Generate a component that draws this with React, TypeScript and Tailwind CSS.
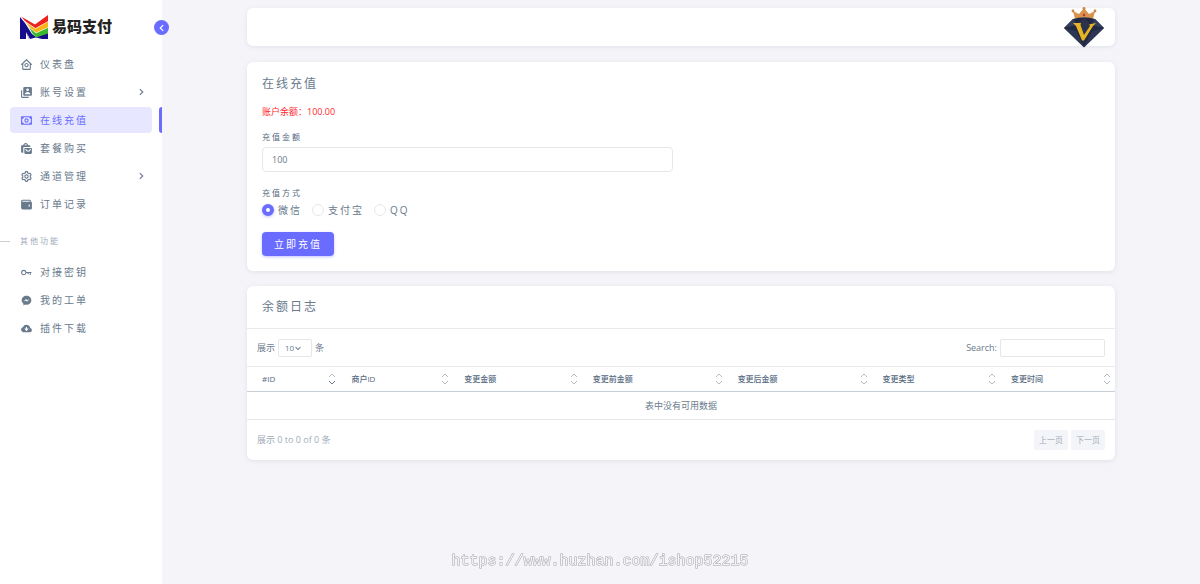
import React, { useState } from 'react';
import type { IconType } from 'react-icons';
import {
  BiChevronDown,
  BiChevronLeft,
  BiChevronRight,
  BiCog,
  BiHomeCircle,
  BiKey,
  BiLogoMessenger,
  BiMoney,
  BiSolidCloudDownload,
  BiSolidShoppingBags,
  BiSolidUserAccount,
  BiSolidWallet,
} from 'react-icons/bi';

type MenuItem = {
  label: string;
  icon: IconType;
  hasChildren?: boolean;
  active?: boolean;
};

const mainMenu: MenuItem[] = [
  { label: '仪表盘', icon: BiHomeCircle },
  { label: '账号设置', icon: BiSolidUserAccount, hasChildren: true },
  { label: '在线充值', icon: BiMoney, active: true },
  { label: '套餐购买', icon: BiSolidShoppingBags },
  { label: '通道管理', icon: BiCog, hasChildren: true },
  { label: '订单记录', icon: BiSolidWallet },
];

const otherMenu: MenuItem[] = [
  { label: '对接密钥', icon: BiKey },
  { label: '我的工单', icon: BiLogoMessenger },
  { label: '插件下载', icon: BiSolidCloudDownload },
];

const payMethods = [
  { id: 'wechat', label: '微信' },
  { id: 'alipay', label: '支付宝' },
  { id: 'qq', label: 'QQ' },
];

const columns = [
  { label: '#ID', width: 'w-[10.3%]', sorted: true },
  { label: '商户ID', width: 'w-[13%]' },
  { label: '变更金额', width: 'w-[14.8%]' },
  { label: '变更前金额', width: 'w-[16.7%]' },
  { label: '变更后金额', width: 'w-[16.7%]' },
  { label: '变更类型', width: 'w-[14.8%]' },
  { label: '变更时间', width: 'w-[13.7%]' },
];

const cardClass = 'rounded-md bg-white shadow-[0_1px_5px_rgba(67,89,113,0.12)]';

function Logo() {
  return (
    <svg viewBox="0 0 28 25" className="h-[25px] w-7" aria-hidden="true">
      <path d="M0 2 L5 8 L12 19 L16 22 L28 17 V24 H9 L6 17 V24 H0 Z" fill="#160f8c" />
      <path d="M9 24 L7 18 L10 24 Z M10 24 L16 22.500 L22 24 Z" fill="#fff" />
      <path d="M1 1.500 L15 9.500 L28 0 V7 L15.500 13.500 L5 6.500 Z" fill="#ee2020" />
      <path d="M5 6.500 L15.500 13.500 L28 6.500 V12.500 L16 18 L9 12 Z" fill="#fcb414" />
      <path d="M9 12 L16 18 L28 12.500 V18.500 L16 22.500 L12.500 18.500 Z" fill="#3cb82c" />
      <path d="M1 1.500 L5 6.500 L15.500 13.500 L28 6.500" fill="none" stroke="#fff" strokeWidth="0.600" />
      <path d="M5 6.500 L9 12 L16 18 L28 12.500" fill="none" stroke="#fff" strokeWidth="0.600" />
    </svg>
  );
}

function Avatar() {
  return (
    <svg viewBox="0 0 42 42" className="h-[42px] w-[42px]" role="img" aria-label="VIP">
      <path d="M12 13 L10 5 L16 8 L21 2 L26 8 L32 5 L30 13 Q21 10 12 13 Z" fill="#d8934f" />
      <circle cx="10" cy="5" r="1.400" fill="#c98545" />
      <circle cx="21" cy="2.500" r="1.400" fill="#c98545" />
      <circle cx="32" cy="5" r="1.400" fill="#c98545" />
      <circle cx="21" cy="9" r="1.300" fill="#c23b34" />
      <path d="M10 13 Q21 9.500 32 13 L41 22 L21 41.500 L1 22 Z" fill="#222940" />
      <path d="M10 13 L14 19 L1 22 Z M32 13 L28 19 L41 22 Z" fill="#343e5e" />
      <path d="M14 19 L21 12 L28 19 L21 34 Z" fill="#2b334d" />
      <path d="M1 22 L13 25 L21 41 Z M41 22 L29 25 L21 41 Z" fill="#2d3654" />
      <path
        d="M10 17 H18 L17.500 19 L21 29 L27 20 L26 18.500 L33 17 L30 20 L21 34.500 H19 L13 20 Z"
        fill="#e9b422"
      />
    </svg>
  );
}

function SortIcon({ sorted }: { sorted?: boolean }) {
  return (
    <svg viewBox="0 0 8 12" className="h-3 w-2 shrink-0" fill="none" stroke="#697a8d" aria-hidden="true">
      <path d="M1 4 L4 1 L7 4" opacity="0.5" />
      <path d="M1 8 L4 11 L7 8" opacity={sorted ? 1 : 0.5} />
    </svg>
  );
}

function MenuList({ items }: { items: MenuItem[] }) {
  return (
    <ul className="flex flex-col gap-0.5">
      {items.map(({ label, icon: Icon, hasChildren, active }) => (
        <li key={label} className="relative px-2.5">
          <a
            href="#"
            className={`flex h-[26px] items-center rounded pr-1 pl-2.5 ${
              active ? 'bg-[#e7e7ff] text-[#696cff]' : 'text-[#697a8d]'
            }`}
          >
            <Icon className="mr-[7px] size-[13px] shrink-0" />
            <span className="flex-1 text-[10px] tracking-[2px]">{label}</span>
            {hasChildren && <BiChevronRight className="size-3.5" />}
          </a>
          {active && <span className="absolute inset-y-0 right-0 w-[3px] rounded-l bg-[#696cff]" />}
        </li>
      ))}
    </ul>
  );
}

function Sidebar() {
  return (
    <aside className="relative w-[162px] shrink-0 bg-white">
      <div className="flex h-[51px] items-center gap-1 pt-1 pl-5">
        <Logo />
        <span className="font-['Liberation_Serif','Noto_Sans_CJK_SC',serif] text-[15px] font-black text-[#222]">
          易码支付
        </span>
      </div>
      <button
        type="button"
        aria-label="收起菜单"
        className="absolute top-5 -right-[7px] flex size-[15px] items-center justify-center rounded-full bg-[#696cff] text-white"
      >
        <BiChevronLeft className="size-3.5 shrink-0" />
      </button>
      <nav>
        <MenuList items={mainMenu} />
        <div className="mt-3 mb-1.5 flex h-6 items-center gap-2.5">
          <span className="h-px w-2.5 bg-[#c9d0d8]" />
          <span className="text-[8px] tracking-[2px] text-[#a1acb8]">其他功能</span>
        </div>
        <MenuList items={otherMenu} />
      </nav>
    </aside>
  );
}

function RechargeCard() {
  const [amount, setAmount] = useState('100');
  const [method, setMethod] = useState('wechat');

  return (
    <section className={`${cardClass} px-[15px] pt-[13px] pb-[15px]`}>
      <h2 className="text-xs leading-[18px] tracking-[2px] text-[#697a8d]">在线充值</h2>
      <p className="mt-[11px] text-[9px] leading-4 text-[#ff1f2d]">账户余额：100.00</p>
      <form onSubmit={(e) => e.preventDefault()}>
        <label htmlFor="amount" className="mt-[11px] block text-[8px] leading-3 tracking-[2px] text-[#566a7f]">
          充值金额
        </label>
        <input
          id="amount"
          value={amount}
          onChange={(e) => setAmount(e.target.value)}
          className="mt-1 block h-[25px] w-[49%] rounded-sm border border-[#e4e8ec] px-[9px] text-[9px] text-[#697a8d] outline-none"
        />
        <fieldset className="mt-[15px]">
          <legend className="text-[8px] leading-3 tracking-[2px] text-[#566a7f]">充值方式</legend>
          <div className="mt-[3px] flex gap-2.5">
            {payMethods.map((m) => (
              <label key={m.id} className="flex h-4 items-center gap-1 text-[10px] tracking-[2px] text-[#697a8d]">
                <input
                  type="radio"
                  name="method"
                  checked={method === m.id}
                  onChange={() => setMethod(m.id)}
                  className="size-3 appearance-none rounded-full border border-[#e4e8ec] bg-white checked:border-4 checked:border-[#696cff] checked:shadow-[0_1px_3px_rgba(105,108,255,0.4)]"
                />
                {m.label}
              </label>
            ))}
          </div>
        </fieldset>
        <button
          type="submit"
          className="mt-3.5 flex h-6 items-center rounded bg-[#696cff] px-3 text-[10px] tracking-[2px] text-white shadow-[0_1px_3px_rgba(105,108,255,0.4)]"
        >
          立即充值
        </button>
      </form>
    </section>
  );
}

function BalanceLog() {
  const [keyword, setKeyword] = useState('');

  return (
    <section className={`${cardClass} text-[9px] text-[#697a8d]`}>
      <h2 className="flex h-[42px] items-center px-[15px] text-xs tracking-[2px]">余额日志</h2>
      <div className="flex h-[38px] items-center justify-between border-t border-[#e9ecef] px-2.5">
        <label className="flex items-center gap-[3px]">
          展示
          <span className="relative flex items-center">
            <select className="h-[18px] w-[34px] appearance-none rounded-xs border border-[#e4e8ec] pl-1.5 text-[8px] outline-none">
              <option>10</option>
              <option>25</option>
              <option>50</option>
              <option>100</option>
            </select>
            <BiChevronDown className="pointer-events-none absolute right-2 size-3" />
          </span>
          条
        </label>
        <label className="flex items-center gap-[3px]">
          Search:
          <input
            type="search"
            value={keyword}
            onChange={(e) => setKeyword(e.target.value)}
            className="h-[18px] w-[105px] rounded-xs border border-[#e4e8ec] px-1.5 outline-none"
          />
        </label>
      </div>
      <table className="w-full table-fixed border-collapse">
        <thead>
          <tr className="h-[25px] border-t border-b border-t-[#e9ecef] border-b-[#c9cfd6]">
            {columns.map((col) => (
              <th
                key={col.label}
                className={`${col.width} p-0 pl-[15px] text-left text-[8px] font-medium text-[#566a7f] last:pr-1`}
              >
                <span className="flex items-center justify-between">
                  {col.label}
                  <SortIcon sorted={col.sorted} />
                </span>
              </th>
            ))}
          </tr>
        </thead>
        <tbody>
          <tr className="h-7 border-b border-[#e4e8ec]">
            <td colSpan={columns.length} className="text-center">
              表中没有可用数据
            </td>
          </tr>
        </tbody>
      </table>
      <div className="flex h-10 items-center justify-between px-2.5 text-[#a1acb8]">
        <span>展示 0 to 0 of 0 条</span>
        <div className="flex gap-[3px] text-[8px]">
          <button type="button" disabled className="h-5 rounded-xs bg-[#f4f5f8] px-[5px]">
            上一页
          </button>
          <button type="button" disabled className="h-5 rounded-xs bg-[#f4f5f8] px-[5px]">
            下一页
          </button>
        </div>
      </div>
    </section>
  );
}

export default function App() {
  return (
    <div className="flex min-h-screen bg-[#f5f5f9] font-['Open_Sans','Noto_Sans_CJK_SC',sans-serif]">
      <Sidebar />
      <main className="flex-1">
        <div className="mx-auto flex max-w-[868px] flex-col pt-2">
          <header className={`${cardClass} mb-4 flex h-[38px] items-center justify-end pr-2.5`}>
            <Avatar />
          </header>
          <div className="flex flex-col gap-[15px]">
            <RechargeCard />
            <BalanceLog />
          </div>
        </div>
      </main>
      <div className="pointer-events-none fixed inset-x-0 bottom-2.5 text-center font-['Liberation_Mono',monospace] text-[15px] leading-6 text-[#f5f5f9] [-webkit-text-stroke:1px_#a3a3a8] [paint-order:stroke_fill]">
        https://www.huzhan.com/ishop52215
      </div>
    </div>
  );
}
